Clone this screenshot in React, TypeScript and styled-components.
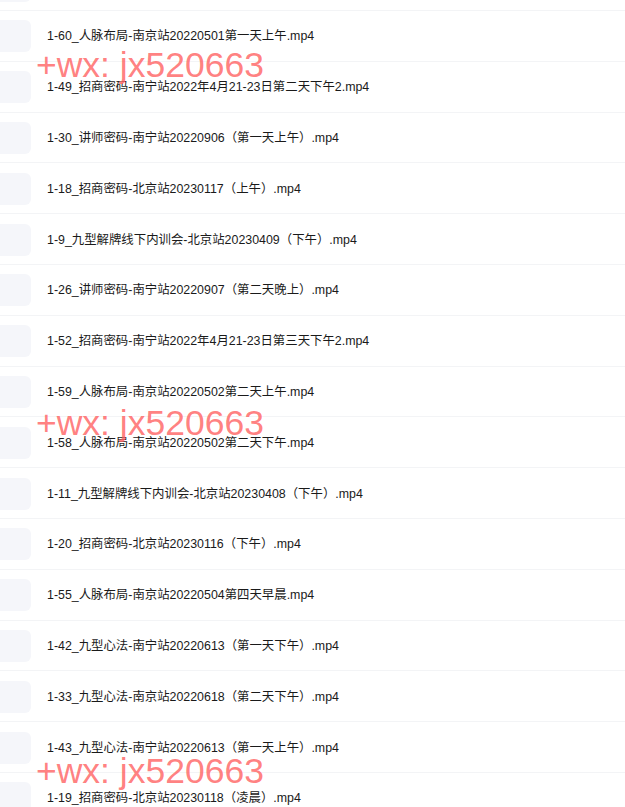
import React from "react";
import styled, { createGlobalStyle } from "styled-components";

const Global = createGlobalStyle`
  html, body { margin: 0; padding: 0; background: #ffffff; }
  body { overflow: hidden; width: 625px; height: 807px; }
`;

const Page = styled.div`
  position: relative;
  width: 625px;
  height: 807px;
  overflow: hidden;
  background: #ffffff;
`;

const List = styled.div`
  display: flex;
  flex-direction: column;
  margin-top: -39.8px;
`;

const Row = styled.div`
  box-sizing: border-box;
  height: 50.8px;
  display: flex;
  align-items: center;
  gap: 16px;
  border-bottom: 1px solid #f3f4f6;
  padding-top: 1px;
`;

const Thumb = styled.div`
  flex: none;
  width: 40px;
  height: 32px;
  margin-left: -9px;
  border-radius: 6px;
  background: #f5f6fa;
`;

const Name = styled.span`
  font-family: "Liberation Sans", "Noto Sans CJK SC", sans-serif;
  font-size: 12.4px;
  line-height: 16px;
  color: #1a1a1a;
  white-space: nowrap;
`;

const Watermark = styled.div<{ $top: number }>`
  position: absolute;
  left: 36px;
  top: ${(p) => p.$top}px;
  font-family: "Liberation Sans", Arial, sans-serif;
  font-size: 35.5px;
  line-height: 1;
  color: rgba(255, 95, 95, 0.8);
  white-space: nowrap;
  pointer-events: none;
`;

const files = [
  "1-61_人脉布局-南京站20220501第一天下午.mp4",
  "1-60_人脉布局-南京站20220501第一天上午.mp4",
  "1-49_招商密码-南宁站2022年4月21-23日第二天下午2.mp4",
  "1-30_讲师密码-南宁站20220906（第一天上午）.mp4",
  "1-18_招商密码-北京站20230117（上午）.mp4",
  "1-9_九型解牌线下内训会-北京站20230409（下午）.mp4",
  "1-26_讲师密码-南宁站20220907（第二天晚上）.mp4",
  "1-52_招商密码-南宁站2022年4月21-23日第三天下午2.mp4",
  "1-59_人脉布局-南京站20220502第二天上午.mp4",
  "1-58_人脉布局-南京站20220502第二天下午.mp4",
  "1-11_九型解牌线下内训会-北京站20230408（下午）.mp4",
  "1-20_招商密码-北京站20230116（下午）.mp4",
  "1-55_人脉布局-南京站20220504第四天早晨.mp4",
  "1-42_九型心法-南宁站20220613（第一天下午）.mp4",
  "1-33_九型心法-南京站20220618（第二天下午）.mp4",
  "1-43_九型心法-南宁站20220613（第一天上午）.mp4",
  "1-19_招商密码-北京站20230118（凌晨）.mp4",
];

export default function App() {
  return (
    <Page>
      <Global />
      <List>
        {files.map((f) => (
          <Row key={f}>
            <Thumb />
            <Name>{f}</Name>
          </Row>
        ))}
      </List>
      <Watermark $top={48}>+wx: jx520663</Watermark>
      <Watermark $top={406}>+wx: jx520663</Watermark>
      <Watermark $top={754}>+wx: jx520663</Watermark>
    </Page>
  );
}
